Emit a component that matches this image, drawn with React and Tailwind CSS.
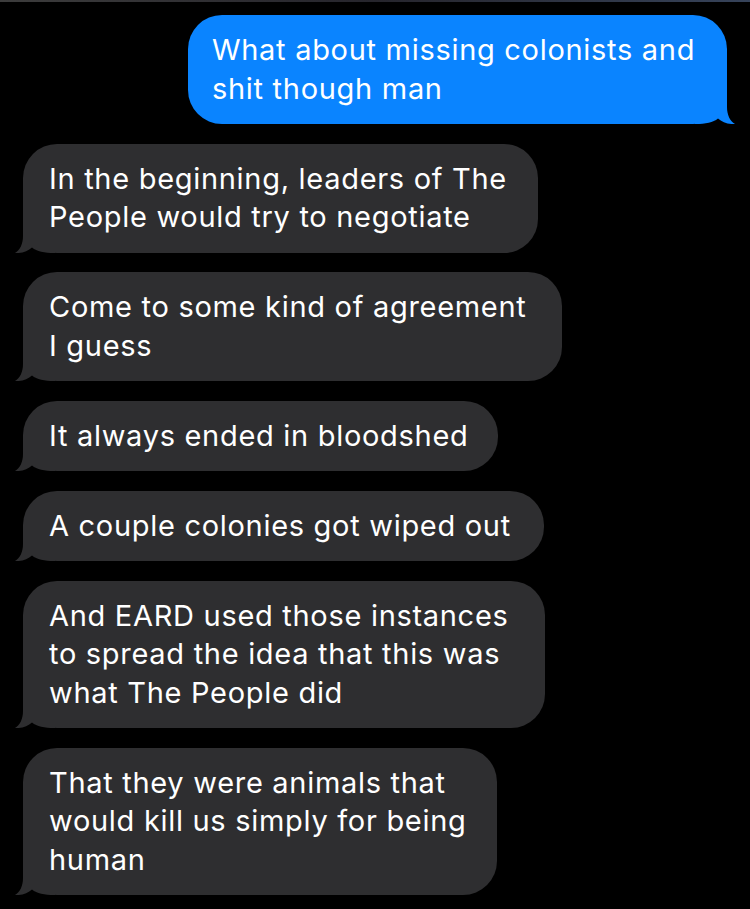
import React from 'react';

const messages = [
    { from: 'me', width: 539, lines: ['What about missing colonists and', 'shit though man'] },
    { from: 'them', width: 515, lines: ['In the beginning, leaders of The', 'People would try to negotiate'] },
    { from: 'them', width: 539, lines: ['Come to some kind of agreement', 'I guess'] },
    { from: 'them', width: 475, lines: ['It always ended in bloodshed'] },
    { from: 'them', width: 521, lines: ['A couple colonies got wiped out'] },
    { from: 'them', width: 522, lines: ['And EARD used those instances', 'to spread the idea that this was', 'what The People did'] },
    { from: 'them', width: 474, lines: ['That they were animals that', 'would kill us simply for being', 'human'] },
];

// little hooked tail at the bottom corner of the bubble
const Tail = ({ side, color }) => (
    <svg
        width="40"
        height="34"
        viewBox="0 0 40 34"
        className={side === 'left' ? 'absolute -left-[8px] bottom-0' : 'absolute -right-[8px] bottom-0 -scale-x-100'}
    >
        <path d="M8,0 L8,17 C8,25 5,31 0,34 C7,34.5 13,32 17,28.5 C22,32.5 29,34 40,34 L40,0 Z" fill={color} />
    </svg>
);

const Bubble = ({ msg }) => {
    const mine = msg.from === 'me';
    const color = mine ? '#0a84ff' : '#2e2e30';
    return (
        <div
            className={
                mine
                    ? 'relative self-end mr-[23px] rounded-[34px] bg-[#0a84ff] pl-[24px] py-[16px]'
                    : 'relative self-start ml-[23px] rounded-[34px] bg-[#2e2e30] pl-[26px] py-[16px]'
            }
            style={{ width: msg.width }}
        >
            <Tail side={mine ? 'right' : 'left'} color={color} />
            <div className="relative text-white text-[29px] leading-[38.5px] tracking-[0.7px] whitespace-nowrap">
                {msg.lines.map((line, i) => (
                    <div key={i}>{line}</div>
                ))}
            </div>
        </div>
    );
};

const App = () => {
    return (
        <div className="w-[750px] h-[909px] overflow-hidden bg-black" style={{ fontFamily: 'Inter, "Noto Sans", sans-serif' }}>
            <div className="h-[2px] bg-gradient-to-r from-[#3c3c3c] via-[#26252c] to-[#36435a]" />
            <div className="flex flex-col gap-[19.5px] pt-[13px]">
                {messages.map((m, i) => (
                    <Bubble key={i} msg={m} />
                ))}
            </div>
        </div>
    );
};

export default App;
